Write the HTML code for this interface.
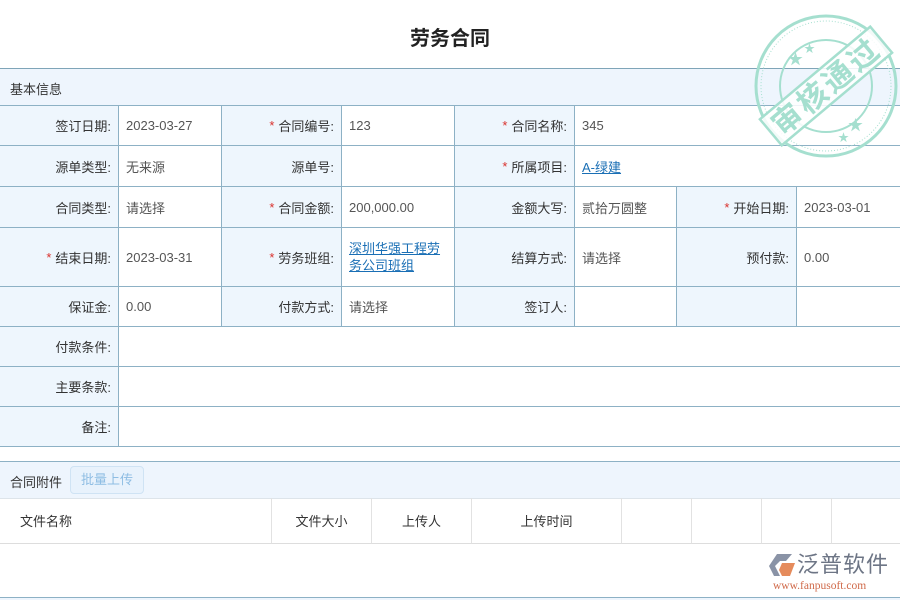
<!DOCTYPE html>
<html><head><meta charset="utf-8"><style>
*{margin:0;padding:0;box-sizing:border-box}
body{width:900px;height:600px;background:#fff;font-family:"Liberation Sans","Noto Sans CJK SC",sans-serif;font-size:13px;color:#333;position:relative;overflow:hidden}
.c{position:absolute;border-right:1px solid #8db1c5;border-bottom:1px solid #8db1c5;display:flex;align-items:center;padding:0 7px}
.l{background:#eef6fd;justify-content:flex-end;color:#333}
.v{background:#fff;color:#555}
.r{color:#d9302c;margin-right:4px}
a{color:#1a6fb5;text-decoration:underline}
.t{position:absolute;top:498px;height:46px;border-right:1px solid #e2e2e2;border-bottom:1px solid #ddd;display:flex;align-items:center;justify-content:center;color:#333}
</style></head><body>
<div style="position:absolute;top:22px;width:900px;text-align:center;font-size:20px;font-weight:bold;color:#222">劳务合同</div>
<div style="position:absolute;top:68px;left:0;width:900px;height:38px;background:#eef5fd;border-top:1px solid #7fa5b8;border-bottom:1px solid #8db1c5;padding:10px 10px;color:#333">基本信息</div>

<div class="c l" style="left:0;top:106px;width:119px;height:40px">签订日期:</div>
<div class="c v" style="left:119px;top:106px;width:103px;height:40px">2023-03-27</div>
<div class="c l" style="left:222px;top:106px;width:120px;height:40px"><span class="r">*</span>合同编号:</div>
<div class="c v" style="left:342px;top:106px;width:113px;height:40px">123</div>
<div class="c l" style="left:455px;top:106px;width:120px;height:40px"><span class="r">*</span>合同名称:</div>
<div class="c v" style="left:575px;top:106px;width:325px;height:40px;border-right:none">345</div>

<div class="c l" style="left:0;top:146px;width:119px;height:41px">源单类型:</div>
<div class="c v" style="left:119px;top:146px;width:103px;height:41px">无来源</div>
<div class="c l" style="left:222px;top:146px;width:120px;height:41px">源单号:</div>
<div class="c v" style="left:342px;top:146px;width:113px;height:41px"></div>
<div class="c l" style="left:455px;top:146px;width:120px;height:41px"><span class="r">*</span>所属项目:</div>
<div class="c v" style="left:575px;top:146px;width:325px;height:41px;border-right:none"><a>A-绿建</a></div>

<div class="c l" style="left:0;top:187px;width:119px;height:41px">合同类型:</div>
<div class="c v" style="left:119px;top:187px;width:103px;height:41px">请选择</div>
<div class="c l" style="left:222px;top:187px;width:120px;height:41px"><span class="r">*</span>合同金额:</div>
<div class="c v" style="left:342px;top:187px;width:113px;height:41px">200,000.00</div>
<div class="c l" style="left:455px;top:187px;width:120px;height:41px">金额大写:</div>
<div class="c v" style="left:575px;top:187px;width:102px;height:41px">贰拾万圆整</div>
<div class="c l" style="left:677px;top:187px;width:120px;height:41px"><span class="r">*</span>开始日期:</div>
<div class="c v" style="left:797px;top:187px;width:103px;height:41px;border-right:none">2023-03-01</div>

<div class="c l" style="left:0;top:228px;width:119px;height:59px"><span class="r">*</span>结束日期:</div>
<div class="c v" style="left:119px;top:228px;width:103px;height:59px">2023-03-31</div>
<div class="c l" style="left:222px;top:228px;width:120px;height:59px"><span class="r">*</span>劳务班组:</div>
<div class="c v" style="left:342px;top:228px;width:113px;height:59px;line-height:17px"><a>深圳华强工程劳务公司班组</a></div>
<div class="c l" style="left:455px;top:228px;width:120px;height:59px">结算方式:</div>
<div class="c v" style="left:575px;top:228px;width:102px;height:59px">请选择</div>
<div class="c l" style="left:677px;top:228px;width:120px;height:59px">预付款:</div>
<div class="c v" style="left:797px;top:228px;width:103px;height:59px;border-right:none">0.00</div>

<div class="c l" style="left:0;top:287px;width:119px;height:40px">保证金:</div>
<div class="c v" style="left:119px;top:287px;width:103px;height:40px">0.00</div>
<div class="c l" style="left:222px;top:287px;width:120px;height:40px">付款方式:</div>
<div class="c v" style="left:342px;top:287px;width:113px;height:40px">请选择</div>
<div class="c l" style="left:455px;top:287px;width:120px;height:40px">签订人:</div>
<div class="c v" style="left:575px;top:287px;width:102px;height:40px"></div>
<div class="c l" style="left:677px;top:287px;width:120px;height:40px"></div>
<div class="c v" style="left:797px;top:287px;width:103px;height:40px;border-right:none"></div>

<div class="c l" style="left:0;top:327px;width:119px;height:40px">付款条件:</div>
<div class="c v" style="left:119px;top:327px;width:781px;height:40px;border-right:none"></div>
<div class="c l" style="left:0;top:367px;width:119px;height:40px">主要条款:</div>
<div class="c v" style="left:119px;top:367px;width:781px;height:40px;border-right:none"></div>
<div class="c l" style="left:0;top:407px;width:119px;height:40px">备注:</div>
<div class="c v" style="left:119px;top:407px;width:781px;height:40px;border-right:none"></div>

<div style="position:absolute;top:461px;left:0;width:900px;height:38px;background:#eef5fd;border-top:1px solid #8db1c5;border-bottom:1px solid #dde4ea"></div>
<div style="position:absolute;top:472px;left:10px;color:#333">合同附件</div>
<div style="position:absolute;top:466px;left:70px;width:74px;height:28px;border:1px solid #cfe3f4;background:#e8f2fc;border-radius:4px;color:#8ebde3;text-align:center;line-height:26px">批量上传</div>
<div class="t" style="left:0;width:272px;justify-content:flex-start;padding-left:20px">文件名称</div>
<div class="t" style="left:272px;width:100px">文件大小</div>
<div class="t" style="left:372px;width:100px">上传人</div>
<div class="t" style="left:472px;width:150px">上传时间</div>
<div class="t" style="left:622px;width:70px"></div>
<div class="t" style="left:692px;width:70px"></div>
<div class="t" style="left:762px;width:70px"></div>
<div class="t" style="left:832px;width:68px;border-right:none"></div>
<div style="position:absolute;top:597px;left:0;width:900px;height:3px;border-top:1px solid #8db1c5;background:#eef5fd"></div>

<svg style="position:absolute;left:768px;top:552px" width="30" height="28" viewBox="0 0 30 28">
<path d="M9 2 L24 2 L18 9 L12 9 L7 14 L12 24 L6 24 L1 14 Z" fill="#8a93a6"/>
<path d="M14 11 L27 11 L22 24 L14 24 L11 18 Z" fill="#e58b5c"/>
</svg>
<div style="position:absolute;left:797px;top:552px;font-size:22px;color:#6d7585;letter-spacing:1px;line-height:26px">泛普软件</div>
<div style="position:absolute;left:773px;top:580px;font-family:'Liberation Serif',serif;font-size:11.5px;color:#d06a4a">www.fanpusoft.com</div>

<svg style="position:absolute;left:748px;top:8px" width="156" height="156" viewBox="0 0 156 156">
<g fill="none" stroke="#a5dfcf">
<circle cx="78" cy="78" r="70" stroke-width="3"/>
<circle cx="78" cy="78" r="65" stroke-width="1" stroke-dasharray="1 2"/>
<circle cx="78" cy="78" r="46" stroke-width="2"/>
</g>
<g transform="rotate(-40 78 78)">
<rect x="6" y="61" width="144" height="34" fill="#fff" fill-opacity="0.85" stroke="#a5dfcf" stroke-width="2.5"/>
<text x="78" y="89" text-anchor="middle" font-size="30" font-weight="bold" fill="#a5dfcf" font-family="Noto Sans CJK SC,sans-serif" letter-spacing="3">审核通过</text>
</g>
<text x="40" y="56" font-size="15" fill="#a5dfcf">★</text>
<text x="56" y="44" font-size="11" fill="#a5dfcf">★</text>
<text x="100" y="122" font-size="15" fill="#a5dfcf">★</text>
<text x="90" y="133" font-size="11" fill="#a5dfcf">★</text>
</svg>
</body></html>
